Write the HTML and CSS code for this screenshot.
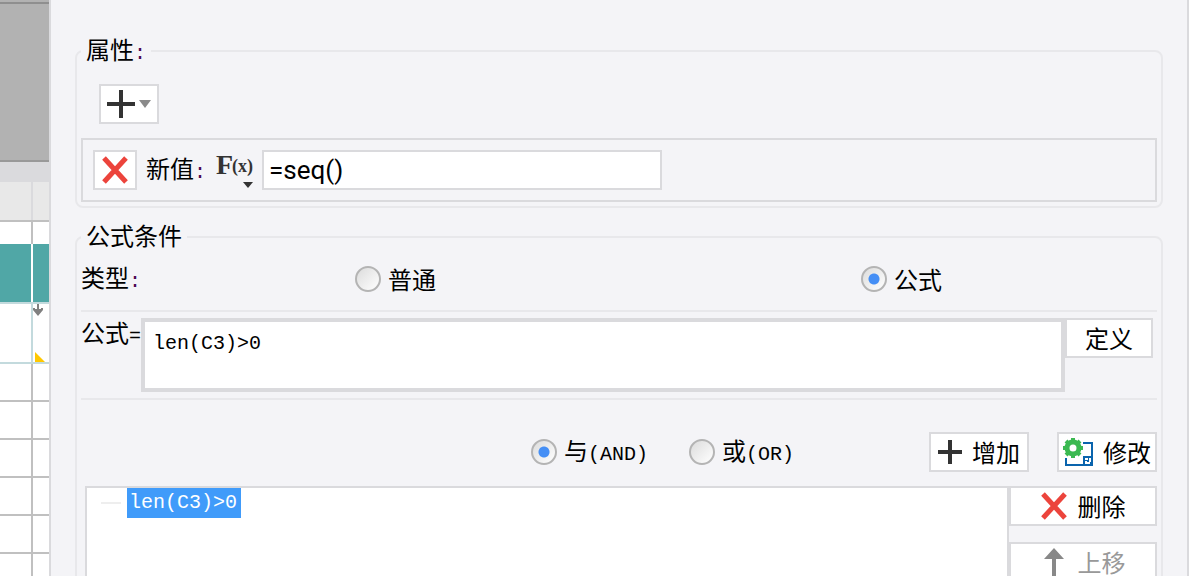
FILE: index.html
```html
<!DOCTYPE html>
<html lang="zh-CN">
<head>
    <meta charset="UTF-8">
    <meta name="viewport" content="width=device-width, initial-scale=1.0">
    <title>条件属性</title>
    <link rel="stylesheet" href="styles.css">
</head>
<body>
    <div class="app">
        <div class="sheet">
            <div class="sheet-strip"></div>
            <div class="sheet-toolbar"></div>
            <div class="sheet-ruler"></div>
            <div class="sheet-row head"><span></span><span></span></div>
            <div class="sheet-row short"><span></span><span></span></div>
            <div class="sheet-row teal"><span></span><span></span></div>
            <div class="sheet-row tall">
                <span></span>
                <span class="marks">
                    <svg width="10" height="12" viewBox="0 0 10 12"><path d="M4 0h2v5h2V4h2v2L5 12 0 6V4h2v1h2z" fill="#808080"/></svg>
                    <svg width="10" height="10" viewBox="0 0 10 10"><path d="M0 0L10 10H0z" fill="#ffc800"/></svg>
                </span>
            </div>
            <div class="sheet-row"><span></span><span></span></div>
            <div class="sheet-row"><span></span><span></span></div>
            <div class="sheet-row"><span></span><span></span></div>
            <div class="sheet-row"><span></span><span></span></div>
            <div class="sheet-row"><span></span><span></span></div>
            <div class="sheet-row"><span></span><span></span></div>
        </div>

        <form class="dialog">
            <fieldset>
                <legend>属性<span class="mono colon">:</span></legend>
                <div class="toolbar">
                    <button type="button" class="btn add-menu" aria-label="添加属性">
                        <svg width="28" height="28" viewBox="0 0 28 28"><path d="M0 14H28M14 0V28" stroke="#333" stroke-width="4"/></svg>
                        <svg width="12" height="8" viewBox="0 0 12 8"><path d="M0 0H12L6 8z" fill="#8a8a8a"/></svg>
                    </button>
                </div>
                <div class="property">
                    <button type="button" class="btn remove" aria-label="删除属性">
                        <svg width="26" height="28" viewBox="0 0 26 28"><path d="M2 2L24 26M24 2L2 26" stroke="#ec443c" stroke-width="5"/></svg>
                    </button>
                    <label for="newValue">新值<span class="mono colon">:</span></label>
                    <button type="button" class="fx" aria-label="公式类型">
                        <svg width="38" height="40" viewBox="0 0 38 40">
                            <text class="fx-name" x="1" y="24">F</text>
                            <text class="fx-arg" x="17" y="22">(x)</text>
                            <path d="M28 32H38L33 38z" fill="#333"/>
                        </svg>
                    </button>
                    <input type="text" id="newValue" class="value" value="=seq()">
                </div>
            </fieldset>

            <fieldset>
                <legend>公式条件</legend>
                <div class="type-row">
                    <span>类型<span class="mono colon">:</span></span>
                    <label class="option"><input type="radio" name="type">普通</label>
                    <label class="option"><input type="radio" name="type" checked>公式</label>
                </div>
                <div class="formula-row">
                    <label for="formula">公式<span class="mono">=</span></label>
                    <textarea id="formula" class="mono" spellcheck="false">len(C3)&gt;0</textarea>
                    <button type="button" class="btn define">定义</button>
                </div>
                <div class="join-row">
                    <label class="option"><input type="radio" name="join" checked><span>与<span class="mono">(AND)</span></span></label>
                    <label class="option"><input type="radio" name="join"><span>或<span class="mono">(OR)</span></span></label>
                    <div class="actions">
                        <button type="button" class="btn action">
                            <svg width="24" height="24" viewBox="0 0 24 24"><path d="M0 12H24M12 0V24" stroke="#333" stroke-width="4"/></svg>
                            增加
                        </button>
                        <button type="button" class="btn action">
                            <svg width="30" height="28" viewBox="0 0 30 28">
                                <path d="M20 5H29V19M3 20V27H22" fill="none" stroke="#0a64ad" stroke-width="2"/>
                                <path d="M20 18H30V28H20z" fill="#0a64ad"/>
                                <path d="M22 20h3v2h-3zM22 23h2v3h-2zM26 20h2v4h-2zM24 24h3v2h-3z" fill="#fff"/>
                                <circle cx="10" cy="10" r="6" fill="#fff" stroke="#3bb951" stroke-width="5"/>
                                <path d="M10 0V4M10 16V20M0 10H4M16 10H20M3 3L6 6M14 14L17 17M17 3L14 6M6 14L3 17" stroke="#3bb951" stroke-width="4"/>
                            </svg>
                            修改
                        </button>
                    </div>
                </div>
                <div class="list-row">
                    <div class="tree">
                        <div class="tree-item"><span class="mono selected">len(C3)&gt;0</span></div>
                    </div>
                    <div class="side">
                        <button type="button" class="btn">
                            <svg width="26" height="28" viewBox="0 0 26 28"><path d="M2 2L24 26M24 2L2 26" stroke="#ec443c" stroke-width="5"/></svg>
                            删除
                        </button>
                        <button type="button" class="btn" disabled>
                            <svg width="26" height="28" viewBox="0 0 26 28"><path d="M13 0L23 11H15V28H11V11H3z" fill="#888"/></svg>
                            上移
                        </button>
                    </div>
                </div>
            </fieldset>
        </form>
    </div>
</body>
</html>
```

FILE: styles.css
```css
* {
    margin: 0;
    padding: 0;
    box-sizing: border-box;
}

body {
    font-family: "Noto Sans CJK SC", sans-serif;
    font-size: 24px;
    line-height: 28px;
    color: #000;
    background: #f4f4f7;
}

button,
input,
textarea {
    font: inherit;
    color: inherit;
}

svg {
    display: block;
    flex: none;
    overflow: visible;
}

.mono {
    font-family: "Liberation Mono", monospace;
    font-size: 20px;
}

.colon {
    color: #4b0a50;
}

.app {
    display: flex;
    height: 100vh;
    overflow: hidden;
}

/* spreadsheet behind the dialog */
.sheet {
    flex: none;
    width: 49px;
    background: #fff;
}

.sheet-strip {
    height: 4px;
    background: #b2b2b2;
    border-bottom: 2px solid #8f8f8f;
}

.sheet-toolbar {
    height: 158px;
    background: #b2b2b2;
    border-bottom: 2px solid #999;
}

.sheet-ruler {
    height: 20px;
    background: #dadadd;
}

.sheet-row {
    display: grid;
    grid-template-columns: 33px 1fr;
    height: 38px;
    border-bottom: 2px solid #c0c0c0;
}

.sheet-row span:first-child {
    border-right: 2px solid #c0c0c0;
}

.sheet-row.head {
    height: 40px;
    background: #e8e8e8;
}

.sheet-row.head span:first-child {
    border-color: #dadadd;
}

.sheet-row.short {
    height: 22px;
    border-bottom: none;
}

.sheet-row.teal {
    height: 60px;
    background: #50a7a6;
    border-color: #c3dadd;
}

.sheet-row.teal span:first-child {
    border-color: #fff;
}

.sheet-row.tall {
    height: 60px;
    border-color: #c3dadd;
}

.sheet-row.tall span:first-child {
    border-color: #c3dadd;
}

.marks {
    display: flex;
    flex-direction: column;
    justify-content: space-between;
}

.marks svg:last-child {
    margin-left: 2px;
}

/* dialog */
.dialog {
    flex: 1;
    min-width: 0;
    padding: 35px 24px 0;
    border-left: 2px solid #dadadd;
    border-right: 2px solid #dadadd;
}

fieldset {
    min-width: 0;
    margin-bottom: 13px;
    padding: 0 4px 4px;
    border: 2px solid #e8e8eb;
    border-radius: 8px;
}

legend {
    height: 32px;
    padding: 0 5px;
}

.btn {
    display: flex;
    align-items: center;
    justify-content: center;
    gap: 11px;
    height: 40px;
    background: #fff;
    border: 2px solid #dadadd;
}

.btn:disabled {
    color: #999;
}

.toolbar {
    padding: 17px 18px 14px;
}

.add-menu {
    width: 60px;
    gap: 4px;
}

.property {
    display: flex;
    align-items: center;
    gap: 9px;
    padding: 10px;
    border: 2px solid #dadadd;
}

.remove {
    width: 44px;
}

.fx {
    background: none;
    border: none;
}

.fx text {
    font-family: "Liberation Serif", serif;
    fill: #333;
}

.fx-name {
    font-size: 28px;
    font-weight: bold;
}

.fx-arg {
    font-size: 18px;
    font-weight: bold;
}

.value {
    width: 400px;
    height: 40px;
    padding: 0 5px;
    border: 2px solid #dadadd;
    background: #fff;
    font-family: Roboto, sans-serif;
    font-size: 26px;
}

.type-row {
    display: grid;
    grid-template-columns: 274px 506fr 296fr;
    align-items: center;
    height: 59px;
    padding-bottom: 5px;
    border-bottom: 2px solid #e8e8eb;
}

.option {
    display: flex;
    align-items: center;
    gap: 7px;
}

input[type="radio"] {
    appearance: none;
    flex: none;
    width: 26px;
    height: 26px;
    border: 2px solid #b4b4b4;
    border-radius: 50%;
    background: linear-gradient(135deg, #dcdcdc, #fff);
}

input[type="radio"]:checked {
    background: radial-gradient(circle, #458ff5 5px, transparent 6px), linear-gradient(135deg, #dcdcdc, #fff);
}

.formula-row {
    display: flex;
    align-items: flex-start;
    padding: 6px 4px 6px 0;
    border-bottom: 2px solid #e8e8eb;
}

.formula-row label {
    width: 60px;
    white-space: nowrap;
}

.formula-row textarea {
    flex: 1;
    min-width: 0;
    height: 74px;
    padding: 8px;
    border: 4px solid #dadadd;
    background: #fff;
    resize: none;
}

.define {
    width: 88px;
}

.join-row {
    display: flex;
    align-items: center;
    gap: 41px;
    padding: 32px 0 14px 450px;
}

.actions {
    display: flex;
    gap: 28px;
    margin-left: auto;
}

.action {
    width: 100px;
    gap: 10px;
    white-space: nowrap;
}

.list-row {
    display: flex;
    height: 240px;
    padding-left: 4px;
}

.tree {
    flex: 1;
    border: 2px solid #dadadd;
    background: #fff;
}

.tree-item {
    display: flex;
    align-items: center;
    gap: 6px;
    padding-left: 14px;
}

.tree-item::before {
    content: "";
    width: 20px;
    height: 2px;
    background: #eee;
}

.selected {
    padding: 0 4px 0 2px;
    line-height: 30px;
    color: #fff;
    background: #409bfa;
}

.side {
    display: flex;
    flex-direction: column;
    gap: 16px;
    width: 148px;
}
```
